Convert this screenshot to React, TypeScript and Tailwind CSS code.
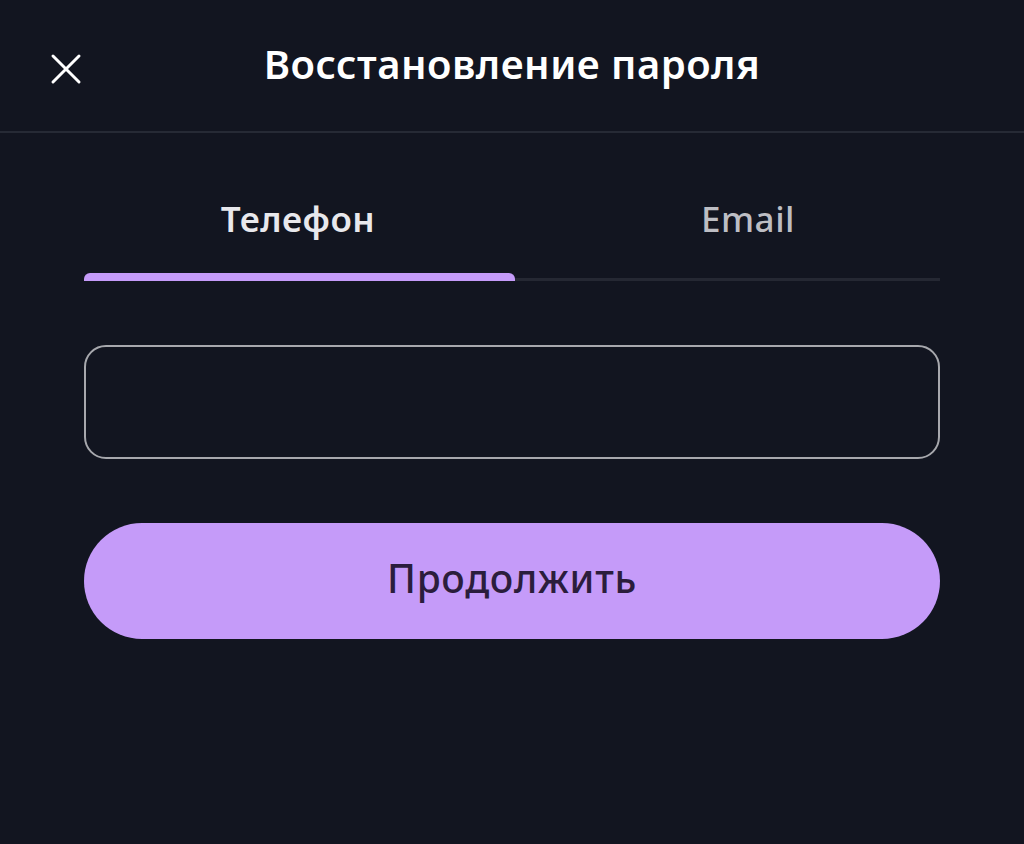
export default function App() {
  return (
    <div className="min-h-[844px] w-full bg-[#121520] text-white" style={{ fontFamily: '"Noto Sans", "DejaVu Sans", sans-serif' }}>
      <header className="relative flex h-[133px] items-center justify-center border-b-2 border-[#262a35]">
        <button className="absolute left-[50px] top-[53px] text-white">
          <svg width="32" height="32" viewBox="0 0 32 32" fill="none" stroke="currentColor" strokeWidth="3" strokeLinecap="round">
            <path d="M3 3 L29 29 M29 3 L3 29" />
          </svg>
        </button>
        <h1 className="text-[40px] font-semibold tracking-[0.5px] pb-[3px]">Восстановление пароля</h1>
      </header>

      <main className="px-[84px]">
        <div className="mt-[61px] grid grid-cols-2 border-b-[3px] border-[#252833]">
          <button className="relative flex h-[84px] items-start justify-center">
            <span className="text-[35px] font-semibold text-[#e8e8ec] leading-none tracking-[0.5px] pt-[7px]">Телефон</span>
            <span className="absolute -bottom-[3px] left-0 right-[-3px] h-[8px] rounded-tr-[6px] rounded-tl-[6px] bg-[#c59bf9]" />
          </button>
          <button className="flex h-[84px] items-start justify-center pl-[44px]">
            <span className="text-[35px] font-medium text-[#bdbec4] leading-none tracking-[0.5px] pt-[7px]">Email</span>
          </button>
        </div>

        <input
          className="mt-[64px] block h-[114px] w-full rounded-[22px] border-2 border-[#a7a8ad] bg-transparent px-6 text-[32px] text-white outline-none"
          type="text"
        />

        <button className="mt-[64px] flex h-[116px] w-full items-center justify-center rounded-full bg-[#c59bf9]">
          <span className="text-[39px] font-medium text-[#2b1d3c] tracking-[0.7px] pb-[6px]">Продолжить</span>
        </button>
      </main>
    </div>
  );
}
